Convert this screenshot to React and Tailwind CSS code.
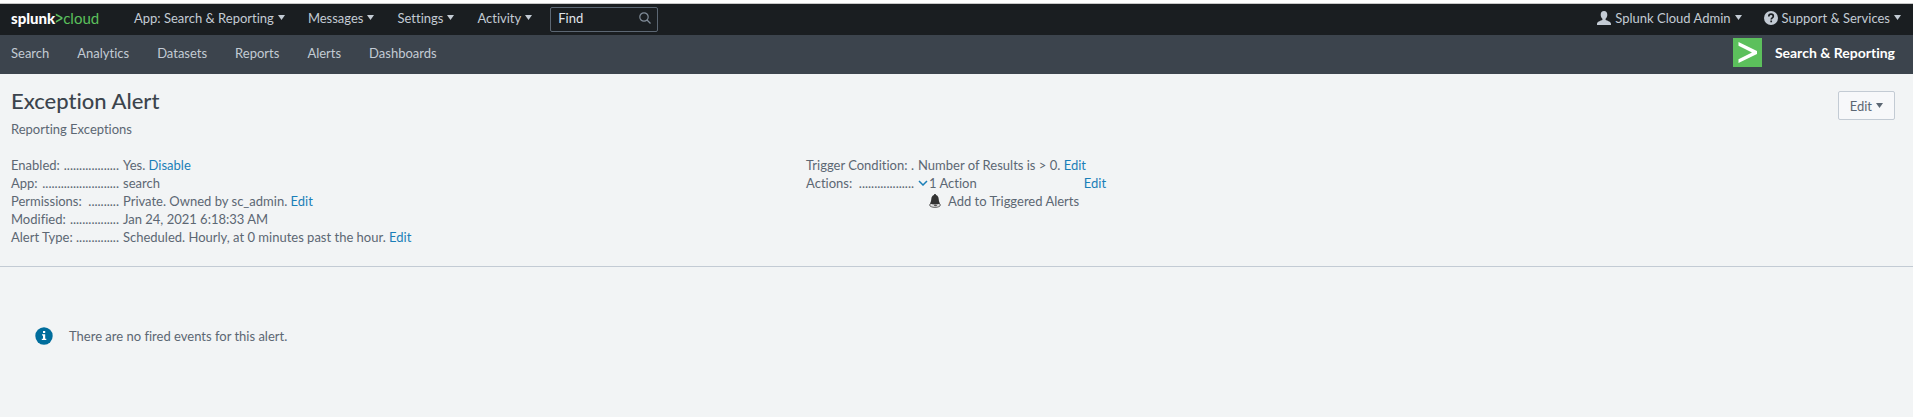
import React from "react";

const Caret = () => (
  <svg width="7" height="5" viewBox="0 0 7 5" aria-hidden="true" className="shrink-0">
    <path d="M0 0h7L3.5 5z" fill="currentColor" />
  </svg>
);

function MenuButton({ children }) {
  return (
    <button type="button" className="flex items-center gap-1 whitespace-nowrap">
      {children}
      <Caret />
    </button>
  );
}

const Logo = () => (
  <a href="#home" aria-label="splunk cloud home" className="flex w-[92px] items-center text-[15px] leading-5 font-black text-white">
    splunk
    <svg width="8" height="12" viewBox="0 0 8 12" aria-hidden="true">
      <path d="M.8 1.500v1.900L6 6.100.8 8.900v1.900L7.500 7V5.200z" fill="#5cc05c" />
    </svg>
    <span className="font-normal text-[#5cc05c]">cloud</span>
  </a>
);

const Link = ({ children }) => (
  <a href="#edit" className="text-[#1a7fb8] hover:underline">{children}</a>
);

function Row({ label, dots, children }) {
  return (
    <div className="flex">
      <dt className="flex w-[108px] shrink-0 justify-between whitespace-nowrap">
        {label}
        <span aria-hidden="true">{".".repeat(dots)}</span>
      </dt>
      <dd className="pl-1 whitespace-nowrap">{children}</dd>
    </div>
  );
}

const tabs = ["Search", "Analytics", "Datasets", "Reports", "Alerts", "Dashboards"];
const menus = ["App: Search & Reporting", "Messages", "Settings", "Activity"];

export default function App() {
  return (
    <div className="min-h-screen bg-[#f2f4f5] font-[Lato,sans-serif] text-[13px] leading-[18px] text-[#5c6773] [font-variant-ligatures:none]">
      <header className="border-t-[3px] border-white">
        <div className="flex h-8 items-center justify-between border-t border-[#c8c8c8] bg-[#1a1e21] pr-3 pb-1 pl-[11px] text-[#c3cbd4]">
          <div className="flex items-center">
            <Logo />
            <nav className="ml-[31px] flex items-center gap-[23px]">
              {menus.map((m) => <MenuButton key={m}>{m}</MenuButton>)}
            </nav>
            <label className="mt-1 ml-[18px] flex h-[25px] w-[108px] items-center rounded-xs border border-[#5c6773] pr-1.5 pl-[7px]">
              <input aria-label="Find" placeholder="Find" className="mb-1 w-full min-w-0 bg-transparent outline-none placeholder:text-[#e1e6eb]" />
              <svg width="12" height="12" viewBox="0 0 12 12" fill="none" stroke="#818d99" strokeWidth="1.2" className="mb-1 shrink-0" aria-hidden="true">
                <circle cx="5" cy="5" r="4.200" /><path d="m8 8 3.500 3.500" />
              </svg>
            </label>
          </div>
          <div className="flex items-center gap-[22px]">
            <MenuButton>
              <svg width="14" height="14" viewBox="0 0 14 14" fill="currentColor" aria-hidden="true">
                <path d="M7 0C4.800 0 3.700 1.600 3.700 3.800c0 1.700.7 3.200 1.700 4v1.300C3.600 9.900 0 10.700 0 13v1h14v-1c0-2.300-3.600-3.100-5.400-3.900V7.800c1-.8 1.700-2.300 1.700-4C10.300 1.600 9.200 0 7 0z" />
              </svg>
              Splunk Cloud Admin
            </MenuButton>
            <MenuButton>
              <svg width="14" height="14" viewBox="0 0 14 14" aria-hidden="true">
                <circle cx="7" cy="7" r="7" fill="currentColor" />
                <path d="M4.800 5.400c0-1.500 1-2.200 2.300-2.200s2.200.8 2.200 2c0 1.600-2.100 1.600-2.100 3.300M7.200 9.500v1.700" fill="none" stroke="#1a1e21" strokeWidth="1.700" />
              </svg>
              Support &amp; Services
            </MenuButton>
          </div>
        </div>
        <div className="flex h-[39px] items-center justify-between bg-[#3c444d] pr-[18px] pb-1 pl-[11px] text-[#c3cbd4]">
          <nav className="flex gap-7">
            {tabs.map((t) => <a key={t} href="#tab">{t}</a>)}
          </nav>
          <a href="#app" className="flex items-center gap-[13px] text-sm font-bold text-white">
            <svg width="29" height="29" viewBox="0 0 29 29" aria-hidden="true">
              <path d="M0 0h29v29H0z" fill="#5cc05c" />
              <path d="M5.500 4v3.800L19 14.500 5.500 21.200V25L24 15.900v-2.800z" fill="#fff" />
            </svg>
            Search &amp; Reporting
          </a>
        </div>
      </header>
      <main>
        <section className="border-b border-[#c3cbd4] pt-[17px] pr-[18px] pb-5 pl-[11px]">
          <div className="flex h-[46px] items-start justify-between">
            <div>
              <h1 className="text-[22px] leading-5 font-medium text-[#3c444d]">Exception Alert</h1>
              <p className="mt-[9px]">Reporting Exceptions</p>
            </div>
            <button type="button" className="flex h-[29px] items-center gap-1 rounded-xs border border-[#c3cbd4] bg-[#f7f8fa] px-[11px]">
              Edit <Caret />
            </button>
          </div>
          <div className="mt-[19px] grid grid-cols-[422fr_578fr]">
            <dl>
              <Row label="Enabled:" dots={18}>Yes. <Link>Disable</Link></Row>
              <Row label="App:" dots={25}>search</Row>
              <Row label="Permissions:" dots={10}>Private. Owned by sc_admin. <Link>Edit</Link></Row>
              <Row label="Modified:" dots={16}>Jan 24, 2021 6:18:33 AM</Row>
              <Row label="Alert Type:" dots={14}>Scheduled. Hourly, at 0 minutes past the hour. <Link>Edit</Link></Row>
            </dl>
            <dl>
              <Row label="Trigger Condition:" dots={1}>Number of Results is &gt; 0. <Link>Edit</Link></Row>
              <Row label="Actions:" dots={18}>
                <div className="flex w-[188px] justify-between">
                  <button type="button" className="flex items-center gap-px">
                    <svg width="10" height="6" viewBox="0 0 10 6" fill="none" stroke="#1a7fb8" strokeWidth="1.500" aria-hidden="true"><path d="m1 1 4 4 4-4" /></svg>
                    1 Action
                  </button>
                  <Link>Edit</Link>
                </div>
                <div className="flex items-center gap-[7px] pl-[11px]">
                  <svg width="12" height="14" viewBox="0 0 12 14" aria-hidden="true">
                    <ellipse cx="6" cy="11" rx="5.400" ry="2.400" fill="#ddd" stroke="#666" />
                    <path d="M6 0c-.8 0-1 .6-1 1C3.300 1.500 2.500 3 2.300 5 2.100 7.200 1.800 8 1 9.600c3 1.200 7 1.200 10 0C10.200 8 9.900 7.200 9.700 5 9.500 3 8.700 1.500 7 1c0-.4-.2-1-1-1z" fill="#333" />
                    <ellipse cx="6.500" cy="11.500" rx="1.600" ry=".8" fill="#555" />
                  </svg>
                  Add to Triggered Alerts
                </div>
              </Row>
            </dl>
          </div>
        </section>
        <p className="flex items-center gap-4 px-[35px] pt-[60px] pb-10">
          <svg width="18" height="18" viewBox="0 0 18 18" aria-hidden="true">
            <circle cx="9" cy="9" r="8.700" fill="#006d9c" />
            <path d="M8 4h2.200v2H8zM7 7.200h3.200v4.600h1.100V13H6.800v-1.200H8V8.400H7z" fill="#fff" />
          </svg>
          There are no fired events for this alert.
        </p>
      </main>
    </div>
  );
}
